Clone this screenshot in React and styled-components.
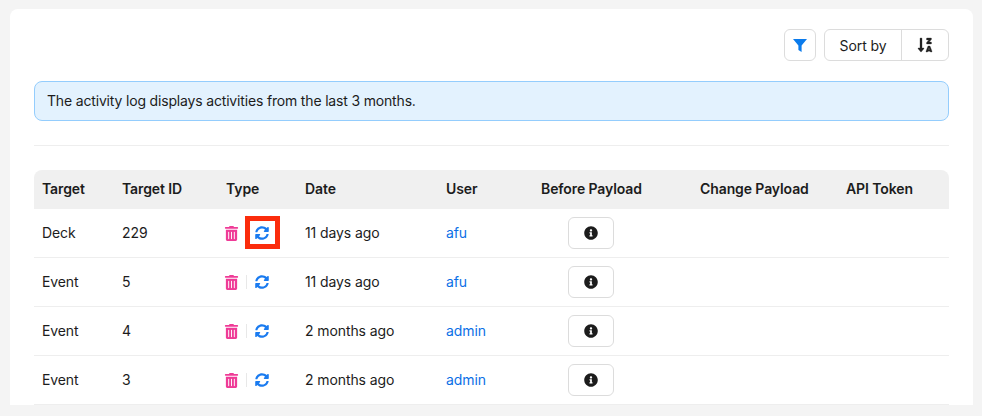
import React from "react";
import styled, { createGlobalStyle } from "styled-components";
import { FaInfoCircle, FaSortAlphaDownAlt, FaSyncAlt, FaTrashAlt } from "react-icons/fa";

const rows = [
  { target: "Deck", id: "229", date: "11 days ago", user: "afu", marked: true },
  { target: "Event", id: "5", date: "11 days ago", user: "afu" },
  { target: "Event", id: "4", date: "2 months ago", user: "admin" },
  { target: "Event", id: "3", date: "2 months ago", user: "admin" },
];

const columns = [
  { label: "Target", width: 80 },
  { label: "Target ID", width: 104 },
  { label: "Type", width: 79 },
  { label: "Date", width: 141 },
  { label: "User", width: 95 },
  { label: "Before Payload", width: 159 },
  { label: "Change Payload", width: 146 },
  { label: "API Token", width: 111 },
];

function FunnelIcon() {
  return (
    <svg width="14" height="13" viewBox="0 0 14 13">
      <path d="M0 0H14L8.6 6.6V13L5.4 11V6.6Z" fill="#0b7bec" />
    </svg>
  );
}

function App() {
  return (
    <>
      <GlobalStyle />
      <Page>
        <Card>
          <Toolbar>
            <IconButton aria-label="Filter">
              <FunnelIcon />
            </IconButton>
            <SortGroup>
              <SortLabel>Sort by</SortLabel>
              <SortToggle aria-label="Sort direction">
                <FaSortAlphaDownAlt size={16} color="#222" stroke="#222" strokeWidth={10} />
              </SortToggle>
            </SortGroup>
          </Toolbar>
          <Notice>The activity log displays activities from the last 3 months.</Notice>
          <Divider />
          <Table>
            <colgroup>
              {columns.map((c) => (
                <Col key={c.label} $width={c.width} />
              ))}
            </colgroup>
            <thead>
              <tr>
                {columns.map((c) => (
                  <HeadCell key={c.label}>{c.label}</HeadCell>
                ))}
              </tr>
            </thead>
            <tbody>
              {rows.map((row) => (
                <tr key={row.target + row.id}>
                  <Cell>{row.target}</Cell>
                  <Cell>{row.id}</Cell>
                  <FlushCell>
                    <TypeIcons>
                      <FaTrashAlt size={15} color="#ef3b97" />
                      <Sep $hidden={row.marked} />
                      <SyncWrap>
                        <FaSyncAlt size={14} color="#1a7bf0" />
                        {row.marked && <Marker />}
                      </SyncWrap>
                    </TypeIcons>
                  </FlushCell>
                  <Cell>{row.date}</Cell>
                  <Cell>
                    <UserLink>{row.user}</UserLink>
                  </Cell>
                  <FlushCell>
                    <PayloadSlot>
                      <InfoButton aria-label="Show payload">
                        <FaInfoCircle size={14} color="#1c1c1c" />
                      </InfoButton>
                    </PayloadSlot>
                  </FlushCell>
                  <Cell />
                  <Cell />
                </tr>
              ))}
            </tbody>
          </Table>
        </Card>
      </Page>
    </>
  );
}

const GlobalStyle = createGlobalStyle`
  html, body {
    margin: 0;
    height: 100%;
    background: #f4f4f4;
    font-family: Inter, "Liberation Sans", sans-serif;
    font-size: 14px;
    letter-spacing: -0.1px;
    color: #1c1c1c;
  }
`;

const Page = styled.div`
  padding: 9px 9px 0 10px;
`;

const Card = styled.div`
  background: #fff;
  border-radius: 8px 8px 0 0;
  padding: 20px 24px 0;
`;

const Toolbar = styled.div`
  display: flex;
  justify-content: flex-end;
  gap: 8px;
`;

const IconButton = styled.button`
  display: flex;
  align-items: center;
  justify-content: center;
  width: 32px;
  height: 32px;
  padding: 0;
  background: #fff;
  border: 1px solid #dcdcdc;
  border-radius: 6px;
`;

const SortGroup = styled.div`
  display: flex;
  height: 32px;
  box-sizing: border-box;
  border: 1px solid #dcdcdc;
  border-radius: 6px;
`;

const SortLabel = styled.span`
  display: flex;
  align-items: center;
  justify-content: center;
  width: 76px;
  border-right: 1px solid #dcdcdc;
`;

const SortToggle = styled.button`
  display: flex;
  align-items: center;
  justify-content: center;
  width: 46px;
  padding: 0;
  background: none;
  border: 0;
`;

const Notice = styled.div`
  margin-top: 20px;
  height: 40px;
  box-sizing: border-box;
  display: flex;
  align-items: center;
  padding: 0 12px;
  background: #e3f2fe;
  border: 1px solid #94cdfd;
  border-radius: 8px;
  line-height: 20px;
  letter-spacing: -0.17px;
`;

const Divider = styled.div`
  margin-top: 24px;
  height: 1px;
  background: #eeeeee;
`;

const Table = styled.table`
  margin-top: 24px;
  width: 915px;
  table-layout: fixed;
  border-collapse: separate;
  border-spacing: 0;
`;

const Col = styled.col`
  width: ${(p) => p.$width}px;
`;

const HeadCell = styled.th`
  height: 37px;
  padding: 0 8px 2px;
  text-align: left;
  font-weight: 600;
  background: #f0f0f0;
  &:first-child {
    border-top-left-radius: 8px;
  }
  &:last-child {
    border-top-right-radius: 8px;
  }
`;

const Cell = styled.td`
  height: 46px;
  padding: 0 8px 2px;
  border-bottom: 1px solid #eeeeee;
`;

const FlushCell = styled.td`
  height: 48px;
  padding: 0 8px;
  border-bottom: 1px solid #eeeeee;
`;

const TypeIcons = styled.div`
  display: flex;
  align-items: center;
  margin-left: -2px;
`;

const Sep = styled.span`
  width: 1px;
  height: 14px;
  margin: 0 8px 0 7px;
  background: ${(p) => (p.$hidden ? "transparent" : "#e8e8e8")};
`;

const SyncWrap = styled.span`
  position: relative;
  display: flex;
`;

const Marker = styled.span`
  position: absolute;
  left: -10px;
  top: -10px;
  width: 35px;
  height: 33px;
  box-sizing: border-box;
  border: 5px solid #fb2c0c;
`;

const UserLink = styled.a`
  color: #0b6fe6;
`;

const PayloadSlot = styled.div`
  display: flex;
  justify-content: center;
  width: 99px;
`;

const InfoButton = styled.button`
  display: flex;
  align-items: center;
  justify-content: center;
  width: 46px;
  height: 32px;
  padding: 0;
  background: #fff;
  border: 1px solid #dcdcdc;
  border-radius: 6px;
`;

export default App;
